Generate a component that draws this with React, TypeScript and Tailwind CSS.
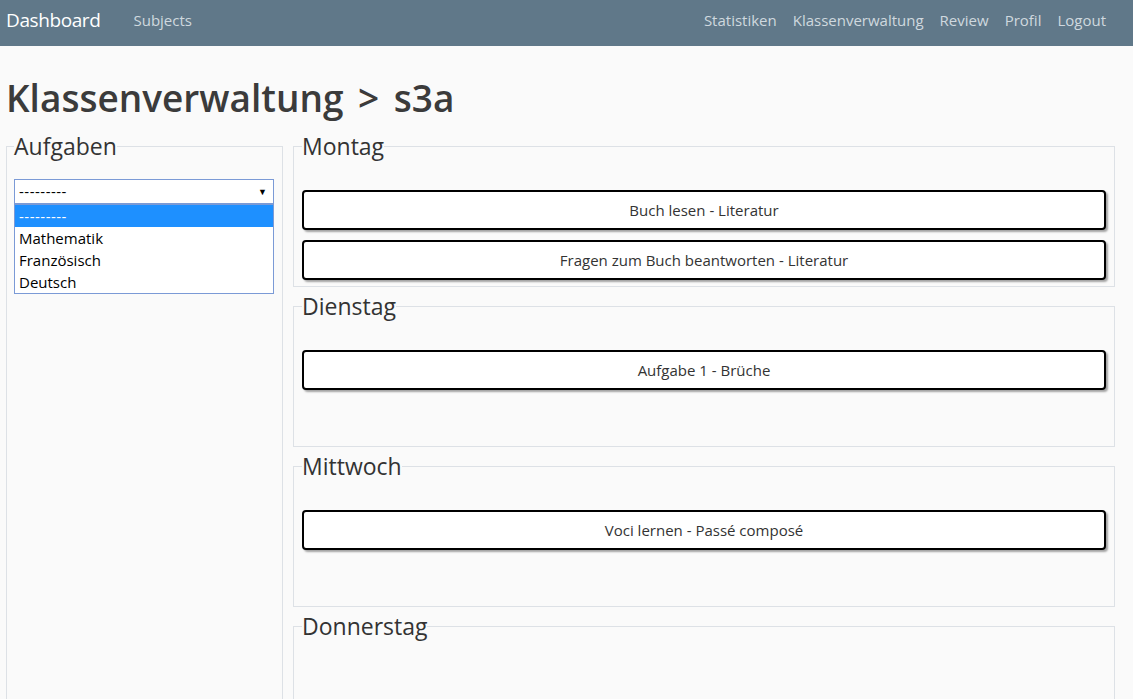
import React from "react";

const font = { fontFamily: '"Open Sans", "Noto Sans", Arial, sans-serif' };

function Task({ label }: { label: string }) {
  return (
    <button className="w-full h-[40px] bg-white border-2 border-black rounded-[4px] shadow-[2px_2px_2px_rgba(0,0,0,0.35)] text-[15px] text-[#333]">
      {label}
    </button>
  );
}

function Day({ name, tasks }: { name: string; tasks: string[] }) {
  return (
    <fieldset className="border border-[#dde1e6] m-0 p-0 min-w-0">
      <legend className="ml-[8px] px-0 text-[23px] leading-[26px] text-[#333]">{name}</legend>
      <div className="min-h-[127px] px-2 pt-[31px] pb-[6px] flex flex-col gap-[10px]">
        {tasks.map((t) => (
          <Task key={t} label={t} />
        ))}
      </div>
    </fieldset>
  );
}

export default function App() {
  return (
    <div className="min-h-[699px] h-[699px] overflow-hidden bg-[#fafafa]" style={font}>
      <nav className="h-[46px] bg-[#607889] flex items-start pt-[7px] pl-[6px] pr-[27px] leading-[26px]">
        <span className="text-white text-[19px] tracking-[-0.4px]">Dashboard</span>
        <span className="ml-[33px] text-[#cfd8df] text-[15px]">Subjects</span>
        <div className="ml-auto flex gap-[16px] text-[#cfd8df] text-[15px]">
          <span>Statistiken</span>
          <span>Klassenverwaltung</span>
          <span>Review</span>
          <span>Profil</span>
          <span>Logout</span>
        </div>
      </nav>
      <div className="pl-[6px]">
        <h1 className="mt-[28px] text-[37px] leading-[48px] text-[#3b3b3b] font-semibold [word-spacing:5px]">
          Klassenverwaltung &gt; s3a
        </h1>
        <div className="mt-[11px] flex gap-[10px] items-start">
          <fieldset className="w-[277px] h-[600px] border border-[#dde1e6] m-0 p-0 shrink-0">
            <legend className="ml-[7px] px-0 text-[23px] leading-[26px] text-[#333]">Aufgaben</legend>
            <div className="pl-[7px] pr-[8px] pt-[20px] relative">
              <div className="h-[25px] bg-white border border-[#7b9ad6] flex items-center justify-between pl-[4px] pr-[6px] text-[15px] text-black">
                <span className="tracking-[0.5px]">---------</span>
                <span className="text-[9px]">▼</span>
              </div>
              <div className="absolute left-[7px] right-[8px] top-[45px] bg-white border border-[#7b9ad6] text-[15px] text-black">
                <div className="h-[22px] bg-[#1e90ff] text-white pl-[4px] leading-[22px] tracking-[0.5px]">---------</div>
                <div className="h-[22px] pl-[4px] leading-[22px]">Mathematik</div>
                <div className="h-[22px] pl-[4px] leading-[22px]">Französisch</div>
                <div className="h-[22px] pl-[4px] leading-[22px]">Deutsch</div>
              </div>
            </div>
          </fieldset>
          <div className="w-[822px] flex flex-col gap-[6px]">
            <Day name="Montag" tasks={["Buch lesen - Literatur", "Fragen zum Buch beantworten - Literatur"]} />
            <Day name="Dienstag" tasks={["Aufgabe 1 - Brüche"]} />
            <Day name="Mittwoch" tasks={["Voci lernen - Passé composé"]} />
            <Day name="Donnerstag" tasks={[]} />
          </div>
        </div>
      </div>
    </div>
  );
}
